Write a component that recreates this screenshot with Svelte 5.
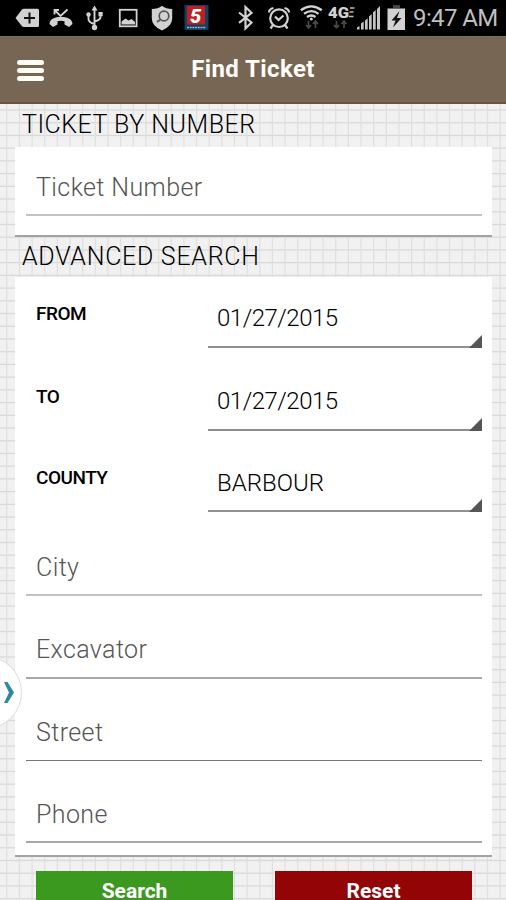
<script lang="ts">
  const pickers = [
    { label: 'FROM', value: '01/27/2015', kind: 'from' },
    { label: 'TO', value: '01/27/2015', kind: 'to' },
    { label: 'COUNTY', value: 'BARBOUR', kind: 'county' },
  ];

  const fields = [
    { name: 'City', kind: 'city' },
    { name: 'Excavator', kind: 'excavator' },
    { name: 'Street', kind: 'street' },
    { name: 'Phone', kind: 'phone' },
  ];
</script>

<div class="screen">
  <div class="status-bar">
    <svg class="status-icons" viewBox="0 0 410 36" width="410" height="36" aria-hidden="true">
      <!-- notifications -->
      <path d="M15.5 18 22 9.5Q22.7 8.7 24 8.7H37.5Q39 8.7 39 10.2V25.5Q39 27 37.5 27H24Q22.7 27 22 26.2Z" fill="#d2d2d2" />
      <path d="M29.5 12.5v11M24 18h11" stroke="#111" stroke-width="2" />
      <path d="M49.5 24C50 18.5 55 17 61 17s11 1.500 11.500 7l-3.500 3-4.500-2.500v-3.200q-3.500-1-7 0v3.200L53 27Z" fill="#d2d2d2" />
      <path d="m54.500 10 6 6 7-6.500M54.500 14.500V10H59" fill="none" stroke="#d2d2d2" stroke-width="1.800" />
      <g stroke="#d2d2d2" stroke-width="1.900" fill="none">
        <path d="M94.500 9v18M94.500 24q-6-1.500-6-5v-4M94.500 21.500q6-1.500 6-4.500v-4" />
      </g>
      <path d="m94.500 5.500 3 5h-6z" fill="#d2d2d2" />
      <circle cx="94.500" cy="27.500" r="2.700" fill="#d2d2d2" />
      <circle cx="88.500" cy="14.500" r="2.200" fill="#d2d2d2" />
      <path d="M98.500 12h4.200v4.200h-4.200z" fill="#d2d2d2" />
      <rect x="119.800" y="9.800" width="16.800" height="16.500" fill="none" stroke="#d2d2d2" stroke-width="1.800" />
      <path d="M121.500 24.500v-3l4-3 3 2 3-1.500 3.500 3v2.500Z" fill="#d2d2d2" />
      <path d="M162 5.800q4 3.200 10.200 3.200v9.500q0 7.500-10.200 12-10.200-4.500-10.200-12V9Q158 9 162 5.800Z" fill="#d2d2d2" />
      <circle cx="164" cy="16" r="4.800" fill="none" stroke="#555" stroke-width="1.700" />
      <path d="m160.500 19.500-3.500 2.500" stroke="#555" stroke-width="2" />
      <rect x="184.500" y="5" width="24" height="25" fill="#123f62" />
      <rect x="187" y="6" width="18" height="18.500" rx="1" fill="#bd2020" />
      <path d="M187 27.500h19" stroke="#9fb6c5" stroke-width="1.400" stroke-dasharray="2 .7" />
      <text x="190" y="23" class="channel">5</text>

      <!-- system -->
      <path d="m239 12.500 12.500 10-6 5.800V7l6 5.800-12.500 10" fill="none" stroke="#d2d2d2" stroke-width="2.200" />
      <g fill="none" stroke="#d2d2d2" stroke-width="2.200">
        <circle cx="279" cy="18.200" r="8.800" />
        <path d="m275 16.500 3.500 3.500 5-4.500M269 12.500q0-3.500 4.500-4.500M289 12.500q0-3.500-4.500-4.500M273 25l-2.500 3.500M285 25l2.500 3.500" />
      </g>
      <g fill="none" stroke="#d2d2d2" stroke-width="2.300">
        <path d="M300.800 10.200q10.500-7.500 21 0M304 13.800q7.500-5.200 14.500 0M307 17q4.500-3 8.500 0" />
      </g>
      <circle cx="311.300" cy="19" r="1.500" fill="#d2d2d2" />
      <path d="M308.500 21v7m-2.500-3 2.500 3 2.500-3M315.500 28v-7m-2.500 3 2.500-3 2.500 3" fill="none" stroke="#4a4a4a" stroke-width="1.700" />
      <path d="M336.500 28v-7m0 7-2.500-3m2.500 3 2.500-3M344 28v-7m-2.500 3 2.500-3 2.500 3" fill="none" stroke="#4a4a4a" stroke-width="1.700" />
      <text x="328" y="17.500" class="network" textLength="21" lengthAdjust="spacingAndGlyphs">4G</text>
      <path d="M350 8h4.500M349.500 12h4M349 16.500h4.500" stroke="#bdbdbd" stroke-width="1.500" />
      <path d="M357 29.500v-2l2.500-1.500v3.500zM361 29.500v-6l2.700-2v8zM365 29.500v-9l2.700-2v11zM369 29.500v-13l2.700-2.500v15.500zM373 29.500v-17l2.700-2.500v19.500zM377 29.500V9l3-3v23.500z" fill="#c5c5c5" />
      <path d="M393 5h7v3h-7z" fill="#444" />
      <path d="M387.500 8.500h17.500V30h-17.500z" fill="#d2d2d2" />
      <path d="m399.500 11-8 9.500h4l-2.500 7 8.500-9.500h-4.500z" fill="#111" />
    </svg>
    <span class="clock">9:47 AM</span>
  </div>

  <header class="app-bar">
    <button class="menu" aria-label="Menu"><i></i><i></i><i></i></button>
    <h1>Find Ticket</h1>
  </header>

  <main>
    <h2 class="by-number">TICKET BY NUMBER</h2>
    <section class="card ticket-card">
      <div class="field ticket"><span>Ticket Number</span></div>
    </section>

    <h2 class="advanced">ADVANCED SEARCH</h2>
    <section class="card search-card">
      {#each pickers as picker}
        <div class="picker {picker.kind}">
          <span class="label">{picker.label}</span>
          <div class="spinner">
            <span>{picker.value}</span>
            <svg width="13" height="13" viewBox="0 0 13 13" aria-hidden="true"><path d="M13 0v13H0z" fill="#555" /></svg>
          </div>
        </div>
      {/each}
      {#each fields as field}
        <div class="field {field.kind}"><span>{field.name}</span></div>
      {/each}
    </section>

    <div class="actions">
      <button class="search">Search</button>
      <button class="reset">Reset</button>
    </div>
  </main>

  <div class="drawer-handle">
    <svg width="12" height="22" viewBox="0 0 12 22" aria-hidden="true">
      <path d="M0 0h3.500L10 10.500 3.500 21H0l5-10.500z" fill="#2d88a5" />
    </svg>
  </div>
</div>

<style>
  :global(body) {
    overflow: hidden;
  }

  .screen {
    position: relative;
    width: 506px;
    height: 900px;
    overflow: hidden;
    font-family: Roboto, "Liberation Sans", sans-serif;
    color: #000;
    background-color: #f1f1f1;
    background-image:
      repeating-linear-gradient(90deg, transparent 0 5.7px, #dfdfdf 6.7px 6.9px, transparent 7.9px 12.65px),
      repeating-linear-gradient(180deg, transparent 0 7.1px, #d9d9d9 8.1px 8.4px, transparent 9.4px 12.72px);
  }

  .status-bar {
    display: flex;
    align-items: center;
    height: 36px;
    background: #000;
  }

  .status-icons {
    flex: none;
  }

  .channel {
    font: italic 900 20px Roboto, sans-serif;
    fill: #fff;
  }

  .network {
    font: 900 14.5px Roboto, sans-serif;
    fill: #d2d2d2;
  }

  .clock {
    padding-left: 3px;
    font-size: 24px;
    line-height: 36px;
    letter-spacing: -0.6px;
    white-space: nowrap;
    color: #bfbfbf;
  }

  .app-bar {
    display: grid;
    grid-template-columns: 60px 1fr 60px;
    align-items: center;
    box-sizing: border-box;
    height: 68px;
    border-top: 1px solid #746e64;
    border-bottom: 2px solid #665440;
    background: #786654;
  }

  .menu {
    display: grid;
    gap: 3px;
    width: 27px;
    margin: 1px 0 0 17px;
    border: 0;
    padding: 0;
    background: none;
  }

  .menu i {
    height: 5px;
    border-radius: 2.5px;
    background: #fffdf8;
  }

  h1 {
    margin: 0;
    padding-bottom: 2px;
    font-size: 24px;
    font-weight: 700;
    line-height: 62px;
    letter-spacing: 0.4px;
    text-align: center;
    color: #fffdf8;
  }

  h2 {
    box-sizing: border-box;
    margin: 0;
    padding-left: 22px;
    font-size: 25px;
    font-weight: 300;
    line-height: 40px;
    letter-spacing: 0.5px;
    white-space: nowrap;
  }

  .by-number {
    height: 43px;
    padding-top: 1px;
  }

  .advanced {
    height: 40px;
    letter-spacing: 0.7px;
  }

  .card {
    box-sizing: border-box;
    margin: 0 14px 0 15px;
    border-bottom: 2px solid #a2a2a2;
    padding: 0 10px 0 11px;
    background: #fff;
  }

  .ticket-card {
    height: 90px;
  }

  .search-card {
    height: 580px;
  }

  .field {
    display: flex;
    align-items: flex-end;
    box-sizing: border-box;
    height: 83px;
    border-bottom: 2px solid #a8a8a8;
    padding: 0 10px 13px;
    font-size: 25px;
    font-weight: 300;
    line-height: 29px;
    letter-spacing: 0.4px;
    color: #555;
  }

  .ticket {
    height: 69px;
    border-color: #c2c2c2;
    padding-bottom: 12px;
  }

  .city {
    height: 84px;
    border-color: #c2c2c2;
    padding-bottom: 12px;
  }

  .street {
    border-bottom: 1px solid #777;
    height: 82px;
  }

  .phone {
    height: 82px;
    padding-bottom: 12px;
  }

  .picker {
    display: grid;
    grid-template-columns: 182px 1fr;
    height: 83px;
  }

  .from {
    height: 71px;
  }

  .county {
    height: 81px;
  }

  .label {
    align-self: end;
    padding: 0 0 23px 10px;
    font-size: 19px;
    font-weight: 500;
    line-height: 22px;
    letter-spacing: -0.5px;
  }

  .spinner {
    display: flex;
    justify-content: space-between;
    align-items: flex-end;
    box-sizing: border-box;
    border-bottom: 2px solid #909090;
    padding-left: 9px;
    font-size: 24px;
    font-weight: 300;
    line-height: 28px;
  }

  .spinner span {
    padding-bottom: 14px;
    letter-spacing: -0.5px;
  }

  .county .spinner span {
    padding-bottom: 13px;
    letter-spacing: 0;
  }

  .spinner svg {
    margin-bottom: -2px;
  }

  .actions {
    display: grid;
    grid-template-columns: 197px 197px;
    gap: 42px;
    padding: 14px 0 0 36px;
  }

  .actions button {
    height: 29px;
    border: 0;
    padding: 0;
    font: 700 21px/24px Roboto, sans-serif;
    padding-top: 8px;
    color: #fff;
  }

  .search {
    background: #3c991f;
  }

  .reset {
    background: #920406;
  }

  .drawer-handle {
    position: absolute;
    top: 656px;
    left: -51px;
    display: flex;
    align-items: center;
    justify-content: flex-end;
    box-sizing: border-box;
    width: 73px;
    height: 73px;
    border: 1px solid #dcdcdc;
    border-radius: 50%;
    padding-right: 5px;
    background: #fff;
  }
</style>
